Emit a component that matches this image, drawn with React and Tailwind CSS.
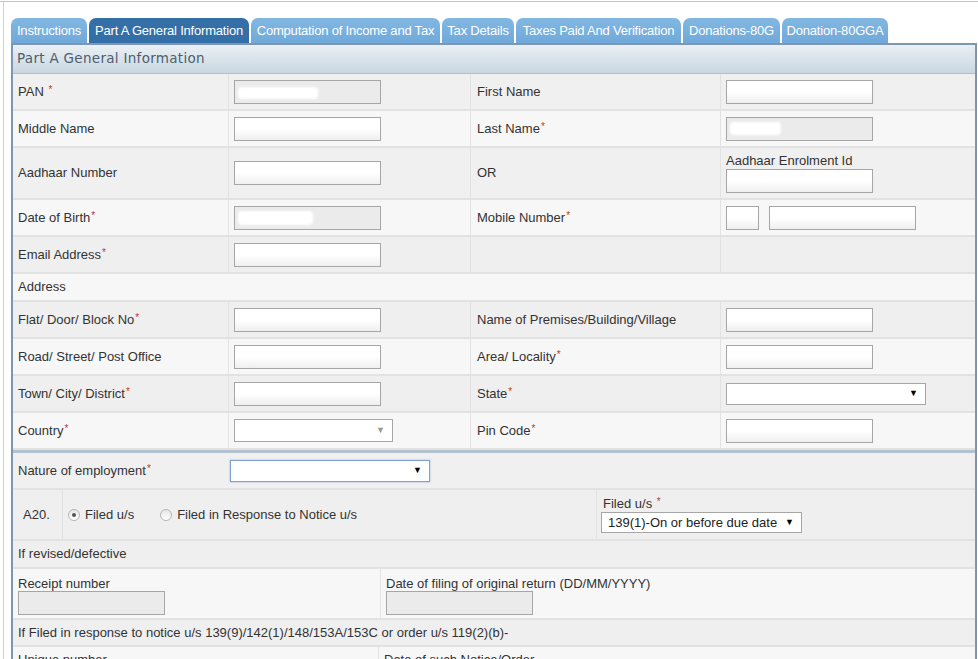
import React from "react";

const Req = () => (
  <span className="relative -top-[3px] ml-[1px] text-[10px] text-[#c0392b]">*</span>
);

const Input = ({ gray, w = "w-[147px]", blob }) => (
  <span
    className={`relative block h-[24px] ${w} border border-[#a6a6a6] ${
      gray ? "bg-[#ebebeb]" : "bg-gradient-to-b from-white via-white to-[#efefef]"
    }`}
  >
    {blob && <span className={`absolute rounded-sm bg-white blur-[1px] ${blob}`} />}
  </span>
);

const Select = ({ w, h = "h-[22px]", border = "border-[#a6a6a6]", arrow = "text-black", children }) => (
  <span
    className={`flex items-center justify-between ${w} ${h} border ${border} bg-white pl-[6px] pr-[7px] text-[13px] text-[#222]`}
  >
    <span>{children}</span>
    <span className={`text-[9px] ${arrow}`}>▼</span>
  </span>
);

const Radio = ({ checked }) => (
  <span className="flex h-[12px] w-[12px] items-center justify-center rounded-full border border-[#b5b5b5] bg-gradient-to-b from-[#e6e6e6] to-white">
    {checked && <span className="h-[4px] w-[4px] rounded-full bg-[#555]" />}
  </span>
);

// four-column label / field row
const Row = ({ bg, h = "h-[35px]", cells }) => (
  <div className={`grid grid-cols-[215px_242px_250px_255px] border-b-2 border-[#e2e2e2] ${bg}`}>
    {cells.map((c, i) => (
      <div
        key={i}
        className={`flex ${h} items-center pl-[5px] ${i > 0 ? "border-l border-[#e2e2e2]" : ""}`}
      >
        {c}
      </div>
    ))}
  </div>
);

const tabs = [
  { label: "Instructions", w: "w-[76px]" },
  { label: "Part A General Information", w: "w-[160px]", active: true },
  { label: "Computation of Income and Tax", w: "w-[189px]" },
  { label: "Tax Details", w: "w-[72px]" },
  { label: "Taxes Paid And Verification", w: "w-[165px]" },
  { label: "Donations-80G", w: "w-[97px]" },
  { label: "Donation-80GGA", w: "w-[106px]" },
];

export default function App() {
  return (
    <div className="h-[659px] w-[978px] overflow-hidden bg-white font-['Liberation_Sans',Arial,sans-serif] text-[13px] text-[#333]">
      <div className="mt-[1px] border-t border-[#c4c4c4]">
        <div className="ml-[3px] border-l border-[#d2d2d2] pl-[7px] pr-[1px] pt-4">
          {/* Tabs */}
          <div className="flex gap-[2px]">
            {tabs.map((t) => (
              <div
                key={t.label}
                className={`flex h-[25px] ${t.w} items-center justify-center whitespace-nowrap rounded-t-[7px] tracking-[-0.2px] text-white ${
                  t.active ? "bg-[#3470a7]" : "bg-gradient-to-b from-[#82b7e2] to-[#70a9da]"
                }`}
              >
                {t.label}
              </div>
            ))}
          </div>

          {/* Panel */}
          <div className="border-2 border-[#7d97b0]">
            <div className="flex h-[29px] items-center border-b border-[#aebfcd] bg-gradient-to-b from-[#eaf0f5] to-[#c9d7e2] pb-[2px] pl-[4px] font-['DejaVu_Sans',sans-serif] text-[13.5px] tracking-[0.3px] text-[#4d5e6e]">
              Part A General Information
            </div>

            <Row
              bg="bg-[#f0f0f0]"
              cells={[
                <span>
                  PAN <Req />
                </span>,
                <Input gray blob="left-[3px] top-[6px] h-[12px] w-[80px]" />,
                <span className="pl-px">First Name</span>,
                <Input />,
              ]}
            />
            <Row
              bg="bg-[#f7f7f7]"
              cells={[
                "Middle Name",
                <Input />,
                <span className="pl-px">
                  Last Name
                  <Req />
                </span>,
                <Input gray blob="left-[3px] top-[4px] h-[13px] w-[51px]" />,
              ]}
            />
            <Row
              bg="bg-[#f0f0f0]"
              h="h-[50px]"
              cells={[
                "Aadhaar Number",
                <Input />,
                <span className="pl-px">OR</span>,
                <div className="flex flex-col">
                  <span className="mb-[1px] leading-[15px]">Aadhaar Enrolment Id</span>
                  <Input />
                </div>,
              ]}
            />
            <Row
              bg="bg-[#f7f7f7]"
              cells={[
                <span>
                  Date of Birth
                  <Req />
                </span>,
                <Input gray blob="left-[3px] top-[4px] h-[14px] w-[75px]" />,
                <span className="pl-px">
                  Mobile Number
                  <Req />
                </span>,
                <div className="flex gap-[10px]">
                  <Input w="w-[33px]" />
                  <Input />
                </div>,
              ]}
            />
            <Row
              bg="bg-[#efefef]"
              cells={[
                <span>
                  Email Address
                  <Req />
                </span>,
                <Input />,
                "",
                "",
              ]}
            />
            <div className="flex h-[28px] items-center border-b-2 border-[#e2e2e2] bg-[#f7f7f7] pl-[5px]">
              Address
            </div>
            <Row
              bg="bg-[#efefef]"
              cells={[
                <span>
                  Flat/ Door/ Block No
                  <Req />
                </span>,
                <Input />,
                <span className="pl-px">Name of Premises/Building/Village</span>,
                <Input />,
              ]}
            />
            <Row
              bg="bg-[#f7f7f7]"
              cells={[
                "Road/ Street/ Post Office",
                <Input />,
                <span className="pl-px">
                  Area/ Locality
                  <Req />
                </span>,
                <Input />,
              ]}
            />
            <Row
              bg="bg-[#efefef]"
              cells={[
                <span>
                  Town/ City/ District
                  <Req />
                </span>,
                <Input />,
                <span className="pl-px">
                  State
                  <Req />
                </span>,
                <Select w="w-[200px]" />,
              ]}
            />
            <div className="border-b-[3px] border-[#b3c1ce]">
              <Row
                bg="bg-[#f7f7f7]"
                cells={[
                  <span>
                    Country
                    <Req />
                  </span>,
                  <Select w="w-[159px]" arrow="text-[#999]" h="h-[23px]" />,
                  <span className="pl-px">
                    Pin Code
                    <Req />
                  </span>,
                  <Input />,
                ]}
              />
            </div>

            {/* Nature of employment */}
            <div className="flex h-[37px] items-center border-b-2 border-[#e2e2e2] bg-[#f0f0f0]">
              <span className="w-[217px] pl-[5px]">
                Nature of employment
                <Req />
              </span>
              <span className="shadow-[0_0_2px_#9bb6dd]">
                <Select w="w-[200px]" border="border-[#7f9fcf]" />
              </span>
            </div>

            {/* A20 */}
            <div className="grid h-[51px] grid-cols-[49px_534px_1fr] border-b-2 border-[#e2e2e2] bg-[#efefef]">
              <div className="flex items-center pl-[10px]">A20.</div>
              <div className="flex items-center border-l border-[#e2e2e2] pl-[5px]">
                <Radio checked />
                <span className="ml-[5px]">Filed u/s</span>
                <span className="ml-[26px]">
                  <Radio />
                </span>
                <span className="ml-[5px]">Filed in Response to Notice u/s</span>
              </div>
              <div className="flex flex-col justify-center border-l border-[#e2e2e2] pl-[4px]">
                <span className="pl-[2px] leading-[15px]">
                  Filed u/s <Req />
                </span>
                <Select w="w-[201px]" h="h-[21px]">
                  139(1)-On or before due date
                </Select>
              </div>
            </div>

            <div className="flex h-[28px] items-center border-b-2 border-[#e2e2e2] bg-[#efefef] pl-[5px]">
              If revised/defective
            </div>

            <div className="grid h-[51px] grid-cols-[367px_1fr] border-b-2 border-[#e2e2e2] bg-[#f7f7f7]">
              <div className="flex flex-col pl-[5px] pt-[7px]">
                <span className="leading-[15px]">Receipt number</span>
                <Input gray w="w-[147px]" />
              </div>
              <div className="flex flex-col border-l border-[#e2e2e2] pl-[5px] pt-[7px]">
                <span className="leading-[15px]">Date of filing of original return (DD/MM/YYYY)</span>
                <Input gray w="w-[147px]" />
              </div>
            </div>

            <div className="flex h-[27px] items-center border-b-2 border-[#e2e2e2] bg-[#efefef] pl-[5px]">
              If Filed in response to notice u/s 139(9)/142(1)/148/153A/153C or order u/s 119(2)(b)-
            </div>

            <div className="grid h-[50px] grid-cols-[365px_1fr] bg-[#f7f7f7]">
              <div className="pl-[5px] pt-[3px]">Unique number</div>
              <div className="border-l border-[#e2e2e2] pl-[5px] pt-[3px]">Date of such Notice/Order</div>
            </div>
          </div>
        </div>
      </div>
    </div>
  );
}
